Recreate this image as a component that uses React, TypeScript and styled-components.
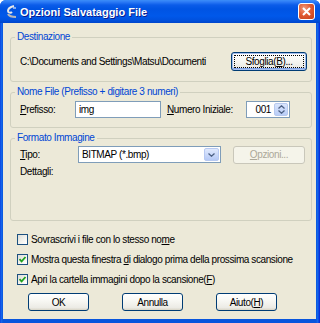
import React from "react";
import styled, { createGlobalStyle } from "styled-components";

const Global = createGlobalStyle`
  html, body { margin: 0; padding: 0; background: #ffffff; }
  body {
    font-family: "Liberation Sans", Arial, sans-serif;
    font-size: 10px;
    letter-spacing: -0.4px;
    color: #000;
  }
  * { box-sizing: border-box; }
`;

const Window = styled.div`
  width: 320px;
  height: 323px;
  display: flex;
  flex-direction: column;
  background: linear-gradient(to right, #0831d9 0, #166aee 1px, #0855dd 3px, #0855dd 316px, #166aee 318px, #0831d9 319px);
  border-radius: 6px 6px 0 0;
  overflow: hidden;
`;

const TitleBar = styled.div`
  height: 23px;
  flex: none;
  display: flex;
  align-items: center;
  padding: 0 5px 0 5px;
  background: linear-gradient(
    to bottom,
    #3c8ef8 0,
    #2c7af5 2px,
    #0b5ce9 5px,
    #0054e3 9px,
    #0058ea 16px,
    #0051de 20px,
    #0046cb 23px
  );
`;

const TitleIcon = styled.svg`
  width: 13px;
  height: 14px;
  flex: none;
`;

const TitleText = styled.span`
  margin-left: 2px;
  color: #fff;
  font-weight: bold;
  font-size: 11px;
  letter-spacing: 0;
  text-shadow: 1px 1px 0 #0a1e8f;
  flex: 1;
`;

const CloseBtn = styled.div`
  width: 17px;
  height: 17px;
  border: 1px solid #fff;
  border-radius: 3px;
  background: radial-gradient(circle at 35% 30%, #f09a7c 0, #e15b32 45%, #c23f1a 100%);
  display: flex;
  align-items: center;
  justify-content: center;
`;

const Body = styled.div`
  flex: 1;
  margin: 0 4px 4px 3px;
  background: #ece9d8;
  display: flex;
  flex-direction: column;
  padding: 8px 4px 0 7px;
`;

const Group = styled.fieldset<{ $mt?: number }>`
  margin: ${(p) => p.$mt ?? 0}px 0 0 0;
  padding: 0 4px 0 9px;
  border: 1px solid #d0d0bf;
  border-radius: 3px;
  min-width: 0;
`;

const Legend = styled.legend`
  color: #0046d5;
  padding: 0 2px;
  margin-left: -5px;
  line-height: 12px;
`;

const Row = styled.div<{ $h: number; $pt?: number; $pb?: number }>`
  display: flex;
  align-items: center;
  height: ${(p) => p.$h}px;
  margin-top: ${(p) => p.$pt ?? 0}px;
  margin-bottom: ${(p) => p.$pb ?? 0}px;
`;

const Label = styled.span<{ $w?: number }>`
  width: ${(p) => (p.$w ? `${p.$w}px` : "auto")};
  flex: none;
  white-space: nowrap;
`;

const PathText = styled.span`
  flex: 1;
  white-space: nowrap;
`;

const U = styled.span`
  text-decoration: underline;
`;

const Btn = styled.div<{ $w: number; $h?: number; $focus?: boolean; $disabled?: boolean }>`
  position: relative;
  width: ${(p) => p.$w}px;
  height: ${(p) => p.$h ?? 18}px;
  flex: none;
  display: flex;
  align-items: center;
  justify-content: center;
  border: 1px solid ${(p) => (p.$disabled ? "#c9c7ba" : "#003c74")};
  border-radius: 3px;
  color: ${(p) => (p.$disabled ? "#aca899" : "#000")};
  background: ${(p) =>
    p.$disabled
      ? "#f5f4ea"
      : "linear-gradient(to bottom, #ffffff 0, #f8f8f4 40%, #ecebe5 85%, #d8d4c6 100%)"};
  box-shadow: ${(p) =>
    p.$focus ? "inset 0 0 0 1px #a6bfee, inset 0 -1px 0 1px #7fa2e7" : "none"};
  &::after {
    content: "";
    display: ${(p) => (p.$focus ? "block" : "none")};
    position: absolute;
    inset: 2px;
    border: 1px dotted #000;
    border-radius: 1px;
  }
`;

const TextInput = styled.div<{ $w: number }>`
  width: ${(p) => p.$w}px;
  height: 17px;
  flex: none;
  border: 1px solid #7f9db9;
  background: #fff;
  display: flex;
  align-items: center;
  padding: 0 3px;
`;

const SpinBox = styled.div`
  width: 44px;
  height: 17px;
  flex: none;
  border: 1px solid #7f9db9;
  background: #fff;
  display: flex;
  align-items: center;
  justify-content: flex-end;
  padding: 1px;
`;

const SpinText = styled.span`
  margin-right: 3px;
`;

const SpinArrows = styled.div`
  width: 14px;
  height: 13px;
  border-radius: 2px;
  background: linear-gradient(to bottom, #d9e5fd, #b9cdf7);
  border: 1px solid #b7c9ee;
  display: flex;
  flex-direction: column;
  align-items: center;
  justify-content: space-around;
`;

const Select = styled.div`
  width: 143px;
  height: 17px;
  flex: none;
  border: 1px solid #7f9db9;
  background: #fff;
  display: flex;
  align-items: center;
  padding: 1px 1px 1px 3px;
`;

const SelectText = styled.span`
  flex: 1;
`;

const DropBtn = styled.div`
  width: 15px;
  height: 13px;
  border-radius: 2px;
  border: 1px solid #b7c9f2;
  background: linear-gradient(to bottom, #e0e9fd, #b5c9f6);
  display: flex;
  align-items: center;
  justify-content: center;
`;

const Details = styled.div`
  height: 57px;
  padding-top: 3px;
`;

const Checks = styled.div`
  display: flex;
  flex-direction: column;
  padding: 8px 0 0 7px;
`;

const CheckRow = styled.div`
  display: flex;
  align-items: center;
  height: 20px;
  gap: 3px;
`;

const Box = styled.span`
  width: 11px;
  height: 11px;
  flex: none;
  border: 1px solid #1c5180;
  background: linear-gradient(135deg, #dcdcd5 0, #f4f4f0 60%, #ffffff 100%);
  display: flex;
  align-items: center;
  justify-content: center;
`;

const Buttons = styled.div`
  display: flex;
  align-items: center;
  margin-top: auto;
  margin-bottom: 8px;
  padding-left: 18px;
  gap: 33px;
`;

const Check = ({ checked }: { checked?: boolean }) => (
  <Box>
    {checked && (
      <svg width="9" height="9" viewBox="0 0 9 9">
        <path d="M1.5 4.2 L3.6 6.4 L7.5 2" fill="none" stroke="#21a121" strokeWidth="1.8" />
      </svg>
    )}
  </Box>
);

const Caret = ({ up }: { up?: boolean }) => (
  <svg width="7" height="4" viewBox="0 0 7 4">
    <path d={up ? "M0.5 3.5 L3.5 0.8 L6.5 3.5" : "M0.5 0.5 L3.5 3.2 L6.5 0.5"} fill="none" stroke="#4d6185" strokeWidth="1.3" />
  </svg>
);

export default function App() {
  return (
    <>
      <Global />
      <Window>
        <TitleBar>
          <TitleIcon viewBox="0 0 13 14">
            <path d="M9 1 C5 2 3 4 3 6 C3 8 6 8 7 7" fill="none" stroke="#e8e8e8" strokeWidth="2" />
            <path d="M3 9 C4 11 7 12 11 12" fill="none" stroke="#b8b8b8" strokeWidth="2" />
            <path d="M8 3 L11 3" stroke="#ffffff" strokeWidth="1" />
          </TitleIcon>
          <TitleText>Opzioni Salvataggio File</TitleText>
          <CloseBtn>
            <svg width="9" height="9" viewBox="0 0 9 9">
              <path d="M1 1 L8 8 M8 1 L1 8" stroke="#fff" strokeWidth="2" />
            </svg>
          </CloseBtn>
        </TitleBar>
        <Body>
          <Group>
            <Legend>Destinazione</Legend>
            <Row $h={19} $pt={9} $pb={10}>
              <PathText>C:\Documents and Settings\Matsu\Documenti</PathText>
              <Btn $w={76} $h={19} $focus>
                Sfoglia(<U>B</U>)...
              </Btn>
            </Row>
          </Group>
          <Group $mt={4}>
            <Legend>Nome File (Prefisso + digitare 3 numeri)</Legend>
            <Row $h={17} $pt={3} $pb={9}>
              <Label $w={55}>
                <U>P</U>refisso:
              </Label>
              <TextInput $w={86}>img</TextInput>
              <Label $w={79} style={{ marginLeft: 6 }}>
                <U>N</U>umero Iniziale:
              </Label>
              <SpinBox>
                <SpinText>001</SpinText>
                <SpinArrows>
                  <Caret up />
                  <Caret />
                </SpinArrows>
              </SpinBox>
            </Row>
          </Group>
          <Group $mt={4}>
            <Legend>Formato Immagine</Legend>
            <Row $h={17} $pt={2}>
              <Label $w={58}>
                <U>T</U>ipo:
              </Label>
              <Select>
                <SelectText>BITMAP (*.bmp)</SelectText>
                <DropBtn>
                  <Caret />
                </DropBtn>
              </Select>
              <Btn $w={72} $disabled style={{ marginLeft: 12 }}>
                <U>O</U>pzioni...
              </Btn>
            </Row>
            <Details>Dettagli:</Details>
          </Group>
          <Checks>
            <CheckRow>
              <Check />
              <span>
                Sovrascrivi i file con lo stesso no<U>m</U>e
              </span>
            </CheckRow>
            <CheckRow>
              <Check checked />
              <span>
                Mostra questa finestra <U>d</U>i dialogo prima della prossima scansione
              </span>
            </CheckRow>
            <CheckRow>
              <Check checked />
              <span>
                Apri la cartella immagini dopo la scansione(<U>F</U>)
              </span>
            </CheckRow>
          </Checks>
          <Buttons>
            <Btn $w={61}>OK</Btn>
            <Btn $w={61}>Annulla</Btn>
            <Btn $w={61}>
              Aiuto(<U>H</U>)
            </Btn>
          </Buttons>
        </Body>
      </Window>
    </>
  );
}
